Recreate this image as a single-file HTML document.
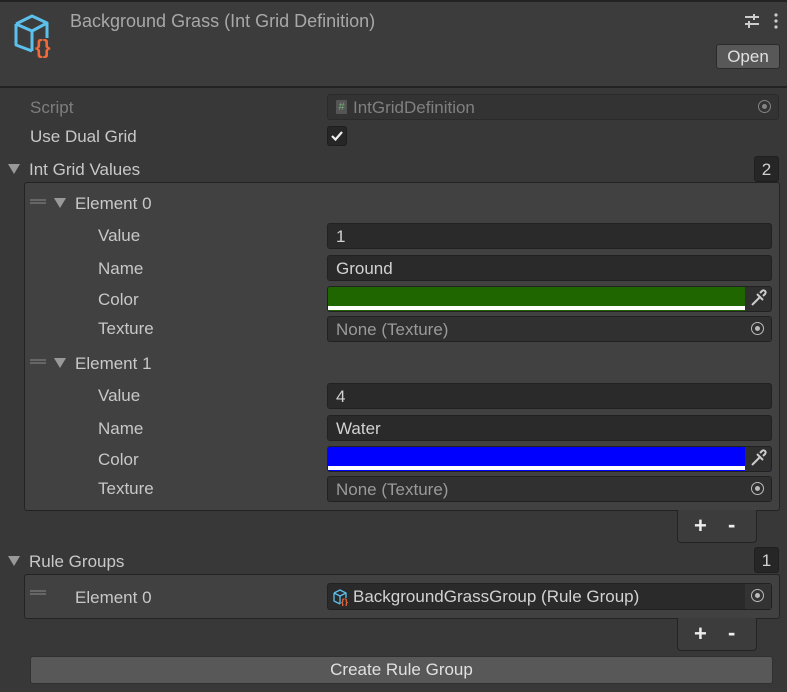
<!DOCTYPE html>
<html><head><style>
*{box-sizing:border-box;margin:0;padding:0}
body{width:787px;height:692px;background:#383838;font-family:"Liberation Sans",sans-serif;font-size:17px;color:#c8c8c8;position:relative;overflow:hidden}
.a{position:absolute}
.lbl{position:absolute;line-height:20px;white-space:nowrap;top:1px}
.f{position:absolute;background:#2a2a2a;border:1px solid #212121;border-radius:3px;padding-left:8px;line-height:25px;color:#d2d2d2}
.tri{position:absolute;width:0;height:0;border-left:6px solid transparent;border-right:6px solid transparent;border-top:10px solid #999}
.pick{position:absolute;right:0;top:0;width:26px;height:100%;background:#353535}
.pick:after{content:"";position:absolute;left:6px;top:5px;width:11px;height:11px;border:1.6px solid #bbb;border-radius:50%}
.pick:before{content:"";position:absolute;left:10px;top:9px;width:5px;height:5px;background:#bbb;border-radius:50%}
.eye{position:absolute;right:0;top:0;width:26px;height:100%;background:#2f2f2f}
.handle{position:absolute;width:16px;height:5px;border-top:2px solid #666;border-bottom:2px solid #666}
.cnt{position:absolute;background:#262626;border:1px solid #1f1f1f;border-radius:3px;text-align:center;line-height:25px;color:#d2d2d2}
.pm{position:absolute;background:#3c3c3c;border:1px solid #232323;border-top:none;border-radius:0 0 4px 4px;color:#eee;font-size:22px;font-weight:bold}
</style></head><body>
<div class="a" style="left:0;top:0;width:787px;height:88px;background:#3c3c3c;border-top:2px solid #232323;border-bottom:2px solid #232323"></div>
<svg class="a" style="left:12px;top:12px" width="48" height="46" viewBox="0 0 48 46">
<path d="M4 12 L20 4 L35 11 L35 26 M4 12 L4 33 L20 39 M4 12 L20 19 L35 11 M20 19 L20 39" fill="none" stroke="#5cc0ec" stroke-width="3" stroke-linejoin="round"/>
<text x="23" y="42" font-family="Liberation Sans" font-size="20" font-weight="bold" fill="#f06a3a">{}</text>
</svg>
<div class="lbl" style="left:70px;top:11px;font-size:18px;color:#a8a8a8">Background Grass (Int Grid Definition)</div>
<svg class="a" style="left:744px;top:13px" width="16" height="16"><path d="M1 4h14M1 11h14M10 1v6M5 8v7" stroke="#ccc" stroke-width="2"/></svg>
<svg class="a" style="left:773px;top:12px" width="6" height="18"><circle cx="3" cy="3" r="1.6" fill="#ccc"/><circle cx="3" cy="9" r="1.6" fill="#ccc"/><circle cx="3" cy="15" r="1.6" fill="#ccc"/></svg>
<div class="a" style="left:716px;top:44px;width:64px;height:25px;background:#585858;border:1px solid #2a2a2a;border-radius:3px;text-align:center;line-height:24px;color:#e0e0e0">Open</div>

<div class="lbl" style="left:30px;top:98px;color:#7e7e7e">Script</div>
<div class="f" style="left:327px;top:94px;width:452px;height:26px;background:#333;border-color:#2b2b2b;color:#808080;padding-left:25px">IntGridDefinition<span class="a" style="left:8px;top:5px;width:11px;height:14px;background:#555;border-radius:1px;font-size:11px;line-height:14px;text-align:center;color:#7a7">#</span><div class="pick" style="background:#333;opacity:.6"></div></div>
<div class="lbl" style="left:30px;top:127px">Use Dual Grid</div>
<div class="a" style="left:327px;top:126px;width:20px;height:20px;background:#262626;border:1px solid #1e1e1e;border-radius:3px"><svg width="18" height="18"><path d="M4 9l3.5 3.5L14 5" stroke="#eee" stroke-width="2.2" fill="none"/></svg></div>

<div class="tri" style="left:8px;top:164px"></div>
<div class="lbl" style="left:29px;top:160px">Int Grid Values</div>
<div class="cnt" style="left:754px;top:156px;width:25px;height:26px">2</div>
<div class="a" style="left:24px;top:182px;width:756px;height:329px;background:#414141;border:1px solid #232323;border-radius:3px"></div>

<div class="handle" style="left:30px;top:199px"></div><div class="tri" style="left:54px;top:198px"></div>
<div class="lbl" style="left:75px;top:194px">Element 0</div>
<div class="lbl" style="left:98px;top:226px">Value</div><div class="f" style="left:327px;top:223px;width:445px;height:26px">1</div>
<div class="lbl" style="left:98px;top:259px">Name</div><div class="f" style="left:327px;top:255px;width:445px;height:26px">Ground</div>
<div class="lbl" style="left:98px;top:290px">Color</div>
<div class="f" style="left:327px;top:286px;width:445px;height:26px;background:#1f6600;padding:0;overflow:hidden"><div class="a" style="left:0;bottom:1px;width:417px;height:4px;background:#fff"></div><div class="eye"><svg width="26" height="24"><path d="M7 18l8-8M12 7l6 6M15 6l2-2a2 2 0 0 1 3 3l-2 2" stroke="#ccc" stroke-width="2" fill="none"/></svg></div></div>
<div class="lbl" style="left:98px;top:319px">Texture</div><div class="f" style="left:327px;top:316px;width:445px;height:26px;background:#303030;color:#9a9a9a">None (Texture)<div class="pick" style="background:#303030"></div></div>

<div class="handle" style="left:30px;top:359px"></div><div class="tri" style="left:54px;top:358px"></div>
<div class="lbl" style="left:75px;top:354px">Element 1</div>
<div class="lbl" style="left:98px;top:386px">Value</div><div class="f" style="left:327px;top:383px;width:445px;height:26px">4</div>
<div class="lbl" style="left:98px;top:419px">Name</div><div class="f" style="left:327px;top:415px;width:445px;height:26px">Water</div>
<div class="lbl" style="left:98px;top:450px">Color</div>
<div class="f" style="left:327px;top:446px;width:445px;height:26px;background:#0000ff;padding:0;overflow:hidden"><div class="a" style="left:0;bottom:1px;width:417px;height:4px;background:#fff"></div><div class="eye"><svg width="26" height="24"><path d="M7 18l8-8M12 7l6 6M15 6l2-2a2 2 0 0 1 3 3l-2 2" stroke="#ccc" stroke-width="2" fill="none"/></svg></div></div>
<div class="lbl" style="left:98px;top:479px">Texture</div><div class="f" style="left:327px;top:476px;width:445px;height:26px;background:#303030;color:#9a9a9a">None (Texture)<div class="pick" style="background:#303030"></div></div>

<div class="pm" style="left:677px;top:510px;width:80px;height:33px"><span class="a" style="left:16px;top:3px">+</span><span class="a" style="left:50px;top:2px">-</span></div>

<div class="tri" style="left:8px;top:556px"></div>
<div class="lbl" style="left:29px;top:552px">Rule Groups</div>
<div class="cnt" style="left:754px;top:547px;width:25px;height:26px">1</div>
<div class="a" style="left:24px;top:574px;width:756px;height:45px;background:#414141;border:1px solid #232323;border-radius:3px"></div>
<div class="handle" style="left:30px;top:590px"></div>
<div class="lbl" style="left:75px;top:588px">Element 0</div>
<div class="f" style="left:327px;top:583px;width:445px;height:27px;padding-left:25px">BackgroundGrassGroup (Rule Group)
<svg class="a" style="left:5px;top:4px" width="18" height="18"><path d="M1 5l6-3 6 3v5M1 5v8l6 3M1 5l6 3 6-3M7 8v8" fill="none" stroke="#5cc0ec" stroke-width="1.3"/><text x="8" y="17" font-size="9" font-weight="bold" fill="#f06a3a" font-family="Liberation Sans">{}</text></svg>
<div class="pick" style="background:#333"></div></div>
<div class="pm" style="left:677px;top:618px;width:80px;height:33px"><span class="a" style="left:16px;top:3px">+</span><span class="a" style="left:50px;top:2px">-</span></div>

<div class="a" style="left:30px;top:656px;width:743px;height:28px;background:#585858;border:1px solid #303030;border-radius:3px;text-align:center;line-height:26px;color:#e0e0e0">Create Rule Group</div>
</body></html>
